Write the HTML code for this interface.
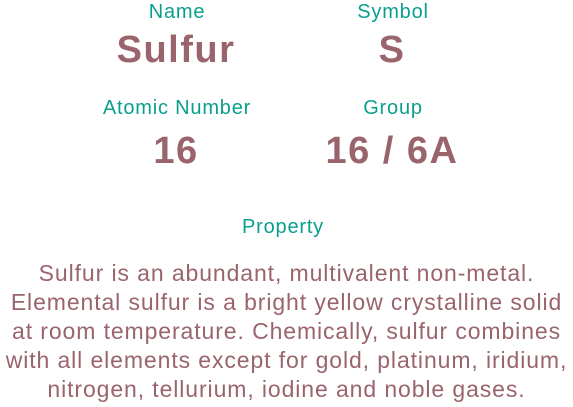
<!DOCTYPE html>
<html><head><style>
body{margin:0;width:573px;height:407px;background:#fff;font-family:"Liberation Sans",sans-serif;position:relative;overflow:hidden}
.l{position:absolute;color:#0a9e8e;font-size:20px;letter-spacing:0.8px;text-align:center;width:220px}
.v{position:absolute;color:#9a646c;font-size:38px;letter-spacing:1.5px;font-weight:bold;text-align:center;width:240px}
.p{position:absolute;left:-20px;top:259px;width:613px;text-align:center;color:#9a646c;font-size:23px;letter-spacing:0.9px;line-height:29px}
</style></head><body>
<div class="l" style="left:67px;top:1px">Name</div>
<div class="l" style="left:283px;top:1px">Symbol</div>
<div class="v" style="left:56px;top:29px">Sulfur</div>
<div class="v" style="left:272px;top:29px">S</div>
<div class="l" style="left:67px;top:97px">Atomic Number</div>
<div class="l" style="left:283px;top:97px">Group</div>
<div class="v" style="left:56px;top:130px">16</div>
<div class="v" style="left:272px;top:130px">16 / 6A</div>
<div class="l" style="left:173px;top:216px">Property</div>
<div class="p">Sulfur is an abundant, multivalent non-metal.<br>Elemental sulfur is a bright yellow crystalline solid<br>at room temperature. Chemically, sulfur combines<br>with all elements except for gold, platinum, iridium,<br>nitrogen, tellurium, iodine and noble gases.</div>
</body></html>
